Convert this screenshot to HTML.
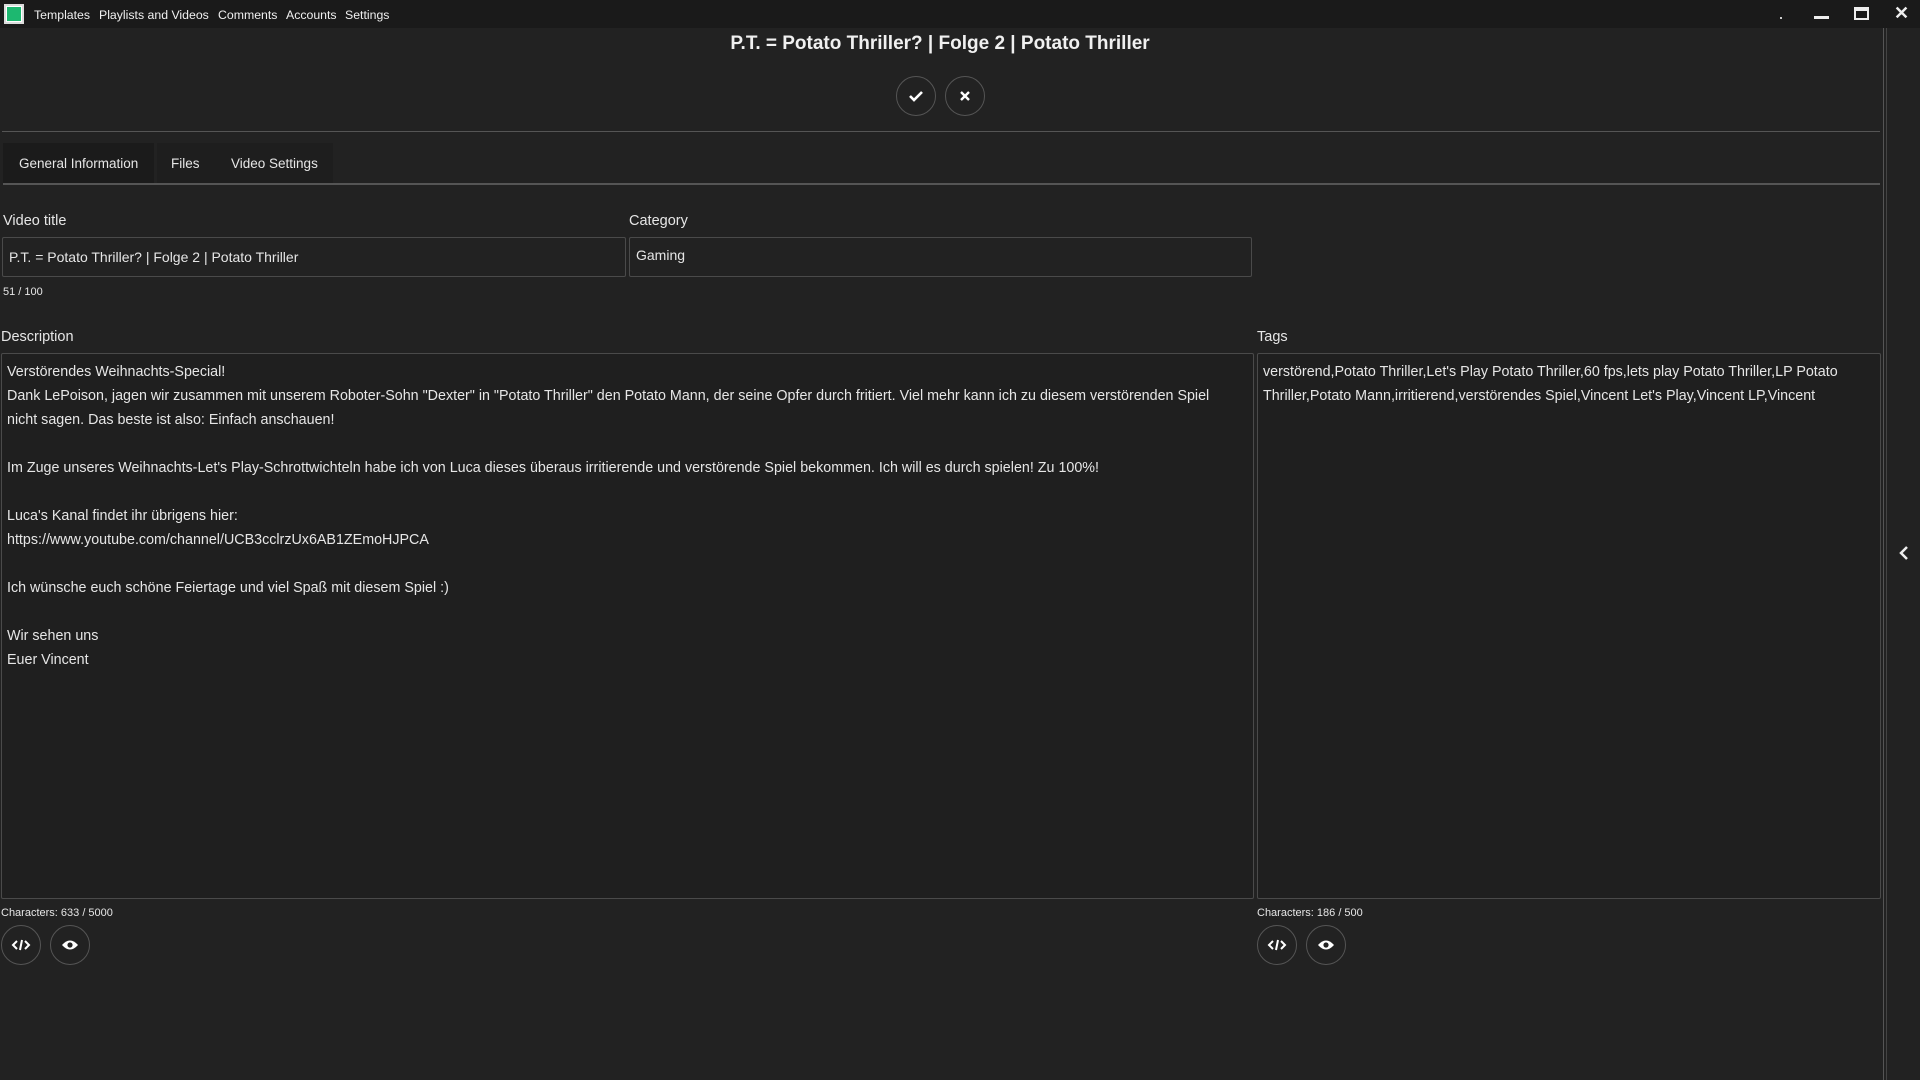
<!DOCTYPE html>
<html><head><meta charset="utf-8"><style>
*{box-sizing:border-box;margin:0;padding:0}
body{width:1920px;height:1080px;background:#222;color:#e6e6e6;font-family:"Liberation Sans",sans-serif;position:relative;overflow:hidden}
.abs{position:absolute}
.tb{left:0;top:0;width:1920px;height:28px;background:#1a1a1a}
.menu{top:8px;font-size:12.3px;color:#f0f0f0}
.box{border:1px solid #4a4a4a;border-radius:2px}
.ta{background:#1f1f1f;font-size:14.3px;line-height:24px;padding:6px 5px;white-space:pre}
.circ{border:1px solid #555;border-radius:50%;width:40px;height:40px;display:flex;align-items:center;justify-content:center}
.lbl{font-size:14.5px}
.small{font-size:11px}
</style></head><body>
<div class="abs tb"></div>
<div class="abs" style="left:4px;top:4px;width:20px;height:20px;border:2px solid #ddd;background:#fff"><div style="margin:1px;width:14px;height:14px;background:#1db870"></div></div>
<div class="abs menu" style="left:34px">Templates</div>
<div class="abs menu" style="left:99px">Playlists and Videos</div>
<div class="abs menu" style="left:218px">Comments</div>
<div class="abs menu" style="left:286px">Accounts</div>
<div class="abs menu" style="left:345px">Settings</div>
<div class="abs" style="left:1780px;top:17px;width:2px;height:2px;background:#ccc"></div>
<div class="abs" style="left:1814px;top:16px;width:15px;height:3px;background:#eee"></div>
<div class="abs" style="left:1854px;top:7px;width:15px;height:13px;border:2px solid #eee;border-top-width:4px"></div>
<div class="abs" style="left:1894px;top:3px;font-size:18px;font-weight:bold;color:#eee">✕</div>
<div class="abs" style="left:1883px;top:28px;width:1px;height:1052px;background:#555"></div>
<div class="abs" style="left:1886px;top:28px;width:1px;height:1052px;background:#444"></div>
<svg class="abs" style="left:1897px;top:545px" width="14" height="16"><path d="M10 2 L4 8 L10 14" stroke="#eee" stroke-width="2.5" fill="none"/></svg>

<div class="abs" style="left:0;width:1880px;top:33px;text-align:center;font-size:19px;font-weight:bold;color:#f0f0f0">P.T. = Potato Thriller? | Folge 2 | Potato Thriller</div>
<div class="abs circ" style="left:896px;top:76px"><svg width="16" height="14"><path d="M2 7 L6 11 L14 3" stroke="#fff" stroke-width="2.6" fill="none"/></svg></div>
<div class="abs circ" style="left:945px;top:76px"><svg width="12" height="12"><path d="M2 2L10 10M10 2L2 10" stroke="#fff" stroke-width="2.4"/></svg></div>
<div class="abs" style="left:2px;top:131px;width:1878px;height:1px;background:#555"></div>

<div class="abs" style="left:3px;top:143px;width:151px;height:40px;background:#1b1b1b"></div>
<div class="abs" style="left:157px;top:143px;width:176px;height:40px;background:#1e1e1e"></div>
<div class="abs" style="left:19px;top:156px;font-size:13.5px">General Information</div>
<div class="abs" style="left:171px;top:156px;font-size:13.5px">Files</div>
<div class="abs" style="left:231px;top:156px;font-size:13.5px">Video Settings</div>
<div class="abs" style="left:3px;top:183px;width:1877px;height:2px;background:#555"></div>

<div class="abs lbl" style="left:3px;top:213px">Video title</div>
<div class="abs lbl" style="left:629px;top:213px">Category</div>
<div class="abs box" style="left:2px;top:237px;width:624px;height:40px;padding:11px 6px;font-size:14px">P.T. = Potato Thriller? | Folge 2 | Potato Thriller</div>
<div class="abs box" style="left:629px;top:237px;width:623px;height:40px;padding:9px 6px;font-size:14px">Gaming</div>
<div class="abs small" style="left:3px;top:286px">51 / 100</div>

<div class="abs lbl" style="left:1px;top:329px">Description</div>
<div class="abs lbl" style="left:1257px;top:329px">Tags</div>
<div class="abs box ta" style="left:1px;top:353px;width:1253px;height:546px">Verstörendes Weihnachts-Special!
Dank LePoison, jagen wir zusammen mit unserem Roboter-Sohn "Dexter" in "Potato Thriller" den Potato Mann, der seine Opfer durch fritiert. Viel mehr kann ich zu diesem verstörenden Spiel
nicht sagen. Das beste ist also: Einfach anschauen!

Im Zuge unseres Weihnachts-Let's Play-Schrottwichteln habe ich von Luca dieses überaus irritierende und verstörende Spiel bekommen. Ich will es durch spielen! Zu 100%!

Luca's Kanal findet ihr übrigens hier:
https://www.youtube.com/channel/UCB3cclrzUx6AB1ZEmoHJPCA

Ich wünsche euch schöne Feiertage und viel Spaß mit diesem Spiel :)

Wir sehen uns
Euer Vincent</div>
<div class="abs box ta" style="left:1257px;top:353px;width:624px;height:546px">verstörend,Potato Thriller,Let's Play Potato Thriller,60 fps,lets play Potato Thriller,LP Potato
Thriller,Potato Mann,irritierend,verstörendes Spiel,Vincent Let's Play,Vincent LP,Vincent</div>

<div class="abs small" style="left:1px;top:907px">Characters: 633 / 5000</div>
<div class="abs small" style="left:1257px;top:907px">Characters: 186 / 500</div>
<div class="abs circ" style="left:1px;top:925px"><svg width="20" height="14"><path d="M6 3L2 7L6 11M14 3L18 7L14 11M11 2L9 12" stroke="#fff" stroke-width="2" fill="none"/></svg></div>
<div class="abs circ" style="left:50px;top:925px"><svg width="18" height="12"><path d="M1 6Q9 -3 17 6Q9 15 1 6Z" fill="#fff"/><circle cx="9" cy="6" r="2.6" fill="#222"/></svg></div>
<div class="abs circ" style="left:1257px;top:925px"><svg width="20" height="14"><path d="M6 3L2 7L6 11M14 3L18 7L14 11M11 2L9 12" stroke="#fff" stroke-width="2" fill="none"/></svg></div>
<div class="abs circ" style="left:1306px;top:925px"><svg width="18" height="12"><path d="M1 6Q9 -3 17 6Q9 15 1 6Z" fill="#fff"/><circle cx="9" cy="6" r="2.6" fill="#222"/></svg></div>
</body></html>
